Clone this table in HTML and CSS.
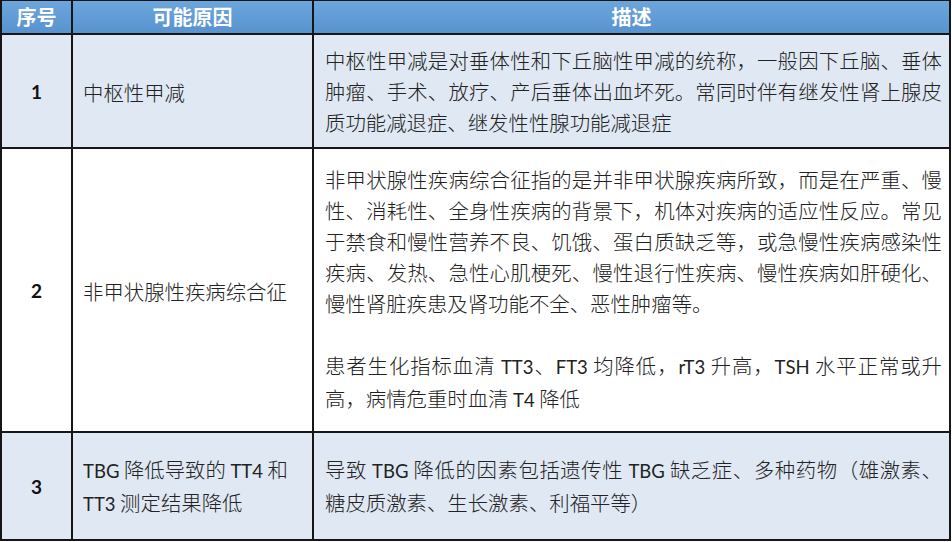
FILE: index.html
```html
<!DOCTYPE html>
<html lang="zh-CN">
<head>
<meta charset="utf-8">
<title>中枢性甲减等</title>
<link rel="stylesheet" href="styles.css">
</head>
<body>
<div class="table">
  <div class="th">序号</div>
  <div class="th">可能原因</div>
  <div class="th">描述</div>

  <div class="td num shade">1</div>
  <div class="td cause shade">中枢性甲减</div>
  <div class="td desc shade">
    <div class="para">
      <span class="ln">中枢性甲减是对垂体性和下丘脑性甲减的统称，一般因下丘脑、垂体</span>
      <span class="ln">肿瘤、手术、放疗、产后垂体出血坏死。常同时伴有继发性肾上腺皮</span>
      <span class="ln last">质功能减退症、继发性性腺功能减退症</span>
    </div>
  </div>

  <div class="td num">2</div>
  <div class="td cause">非甲状腺性疾病综合征</div>
  <div class="td desc">
    <div class="para">
      <span class="ln">非甲状腺性疾病综合征指的是并非甲状腺疾病所致，而是在严重、慢</span>
      <span class="ln">性、消耗性、全身性疾病的背景下，机体对疾病的适应性反应。常见</span>
      <span class="ln">于禁食和慢性营养不良、饥饿、蛋白质缺乏等，或急慢性疾病感染性</span>
      <span class="ln">疾病、发热、急性心肌梗死、慢性退行性疾病、慢性疾病如肝硬化、</span>
      <span class="ln last">慢性肾脏疾患及肾功能不全、恶性肿瘤等。</span>
    </div>
    <div class="para gap">
      <span class="ln">患者生化指标血清 <span class="en">TT3</span>、<span class="en">FT3</span> 均降低，<span class="en">rT3</span> 升高，<span class="en">TSH</span> 水平正常或升</span>
      <span class="ln last">高，病情危重时血清 <span class="en">T4</span> 降低</span>
    </div>
  </div>

  <div class="td num shade">3</div>
  <div class="td cause shade"><span><span class="en">TBG</span> 降低导致的 <span class="en">TT4</span> 和<br><span class="en">TT3</span> 测定结果降低</span></div>
  <div class="td desc shade">
    <div class="para">
      <span class="ln">导致 <span class="en">TBG</span> 降低的因素包括遗传性 <span class="en">TBG</span> 缺乏症、多种药物（雄激素、</span>
      <span class="ln last">糖皮质激素、生长激素、利福平等）</span>
    </div>
  </div>
</div>
</body>
</html>
```

FILE: styles.css
```css
html, body {
  margin: 0;
  padding: 0;
  background: #ffffff;
}

body {
  font-family: Lato, "Noto Sans CJK SC", sans-serif;
  color: #1e1e1e;
}

.table {
  display: grid;
  width: 951px;
  box-sizing: border-box;
  grid-template-columns: 69px 239px 635px;
  grid-template-rows: 32px 112px 282px 106px;
  gap: 2px;
  padding: 1px 2px 2px 2px;
  background: #161616;
}

.th {
  display: flex;
  align-items: center;
  justify-content: center;
  background: linear-gradient(#6ca6dc, #5893d0);
  color: #ffffff;
  font-family: "Noto Sans CJK SC", sans-serif;
  font-weight: 700;
  font-size: 20px;
  line-height: 1;
}

.td {
  display: flex;
  align-items: center;
  background: #ffffff;
  font-family: "Noto Sans CJK SC", sans-serif;
  font-weight: 300;
  font-size: 20.4px;
  line-height: 31px;
  color: #222222;
}

.shade {
  background: #dfe8f3;
}

.num {
  justify-content: center;
  font-family: Lato, sans-serif;
  font-weight: 700;
  font-size: 19px;
  color: #111111;
}

.cause {
  padding-left: 10px;
  padding-top: 2px;
}

.desc {
  flex-direction: column;
  align-items: stretch;
  justify-content: center;
  padding: 0 7px 0 11px;
}

.para {
  display: flex;
  flex-direction: column;
}

.para.gap {
  margin-top: 31px;
}

.ln {
  display: block;
  white-space: nowrap;
  text-align: justify;
  text-align-last: justify;
}

.ln.last {
  text-align-last: left;
}

.en {
  font-family: Lato, sans-serif;
  font-weight: 400;
  font-size: 18.5px;
}
```
